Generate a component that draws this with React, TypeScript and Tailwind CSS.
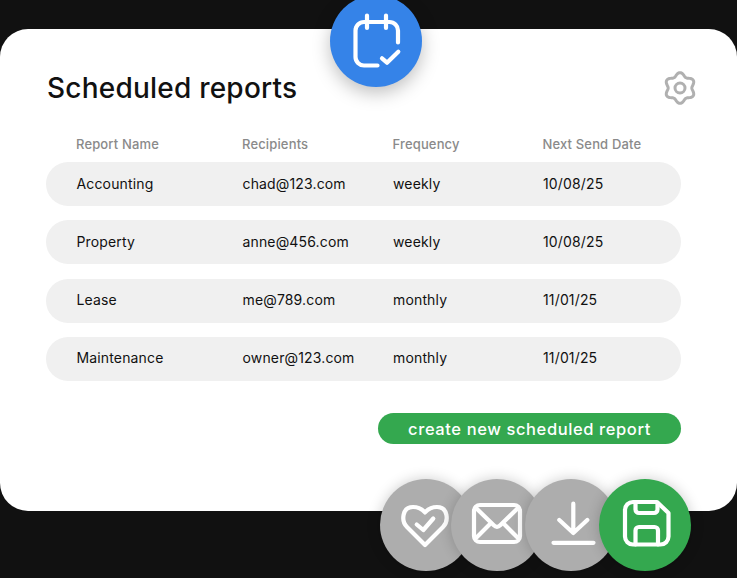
const rows = [
  ["Accounting", "chad@123.com", "weekly", "10/08/25"],
  ["Property", "anne@456.com", "weekly", "10/08/25"],
  ["Lease", "me@789.com", "monthly", "11/01/25"],
  ["Maintenance", "owner@123.com", "monthly", "11/01/25"],
];

const gearPath = (() => {
  const pts: string[] = [];
  for (let i = 0; i < 120; i++) {
    const t = (i / 120) * Math.PI * 2;
    const r = 13.6 * (1 + 0.13 * Math.cos(6 * t));
    const x = 18 + r * Math.sin(t);
    const y = 18 - r * Math.cos(t);
    pts.push(`${x.toFixed(2)} ${y.toFixed(2)}`);
  }
  return "M" + pts.join("L") + "Z";
})();

function Icon({ children }: { children: React.ReactNode }) {
  return (
    <svg viewBox="0 0 92 92" className="h-[92px] w-[92px]" fill="none" stroke="white" strokeWidth="4.2" strokeLinecap="round" strokeLinejoin="round">
      {children}
    </svg>
  );
}

export default function App() {
  return (
    <div className="relative h-[578px] w-[737px] overflow-hidden bg-[#111111] pt-[29px] font-['Inter',sans-serif]">
      <div className="h-[482px] rounded-[28px] bg-white pl-[46px] pr-[56px] pt-[41px]">
        <div className="flex items-center justify-between">
          <h1 className="ml-px text-[28px] font-medium leading-[36px] tracking-[0.22px] text-[#111111]">Scheduled reports</h1>
          <svg viewBox="0 0 36 36" className="mr-[-17px] h-9 w-9" fill="none" stroke="#b0b0b0" strokeWidth="3">
            <path d={gearPath} strokeLinejoin="round" />
            <circle cx="18" cy="18" r="5" />
          </svg>
        </div>
        <div className="mt-[30px] grid grid-cols-[196px_150.5px_150px_1fr] pb-[10px] pl-[30px] text-[13px] font-medium leading-[16px] tracking-[0.15px] text-[#8a8a8a]">
          <span>Report Name</span>
          <span className="-ml-[30px]">Recipients</span>
          <span className="-ml-[30px]">Frequency</span>
          <span className="-ml-[30px]">Next Send Date</span>
        </div>
        <div className="flex flex-col gap-[14.3px]">
          {rows.map((r) => (
            <div key={r[0]} className="grid h-[44px] w-[635px] grid-cols-[166px_150.5px_150px_1fr] items-center rounded-[22px] bg-[#f0f0f0] pb-[2px] pl-[30.5px] text-[14px] font-normal tracking-[0.15px] text-[#111111]">
              {r.map((c) => (
                <span key={c}>{c}</span>
              ))}
            </div>
          ))}
        </div>
        <div className="mt-[32px] flex w-[635px] justify-end">
          <button className="flex h-[31.5px] w-[303px] items-center justify-center rounded-full bg-[#34a84f] pt-[1px] text-[16.5px] font-[550] tracking-[0.6px] text-white">
            create new scheduled report
          </button>
        </div>
      </div>

      <div className="absolute left-[329.5px] top-[-5px] h-[92px] w-[92px] rounded-full bg-[#3583e8] shadow-[0_6px_18px_rgba(0,0,0,0.25)]">
        <Icon>
          <path d="M47.5 70.5H34a8.5 8.5 0 0 1-8.5-8.5V35.5A8.5 8.5 0 0 1 34 27h25.5a8.5 8.5 0 0 1 8.5 8.500v12" />
          <path d="M37 20.500V33M56 20.500V33" />
          <path d="M52 63.300l5 4.400 11.300-11" />
        </Icon>
      </div>

      <div className="absolute left-[380px] top-[479px] h-[92px] w-[92px] rounded-full bg-[#adadad] shadow-[0_0_14px_rgba(0,0,0,0.2)]">
        <Icon>
          <path d="M45 66 27 48C21 42 22 28 33 28 38 28 42 30 45 33.500 48 30 52 28 57 28 68 28 69 42 63 48Z" />
          <path d="M36.700 45.500 43.300 51 53.300 39.500" />
        </Icon>
      </div>
      <div className="absolute left-[451px] top-[479px] h-[92px] w-[92px] rounded-full bg-[#adadad] shadow-[0_0_14px_rgba(0,0,0,0.2)]">
        <Icon>
          <rect x="23" y="26" width="46" height="37" rx="6" />
          <path d="M25.500 29.500 42.500 46c2.500 2.500 4.500 2.500 7 0L66.500 29.500" />
          <path d="M26 58 38 46M66 58 54 46" />
        </Icon>
      </div>
      <div className="absolute left-[525px] top-[479px] h-[92px] w-[92px] rounded-full bg-[#adadad] shadow-[0_0_14px_rgba(0,0,0,0.2)]">
        <Icon>
          <path d="M48.300 24.700V54M34.300 41 48.300 54 62.300 41" />
          <path d="M28.500 63.800H68.500" />
        </Icon>
      </div>
      <div className="absolute left-[599px] top-[479px] h-[92px] w-[92px] rounded-full bg-[#34a84f] shadow-[0_0_14px_rgba(0,0,0,0.2)]">
        <Icon>
          <path d="M34 23H58L69.500 34V57.500A8 8 0 0 1 61.500 65.500H34A8 8 0 0 1 26 57.500V31A8 8 0 0 1 34 23Z" />
          <path d="M36.500 23V30.500A3.500 3.500 0 0 0 40 34H55A3.500 3.500 0 0 0 58.500 30.500V24" />
          <path d="M36.500 65.500V51.500A3.500 3.500 0 0 1 40 48H55.500A3.500 3.500 0 0 1 59 51.500V65.500" />
        </Icon>
      </div>
    </div>
  );
}
